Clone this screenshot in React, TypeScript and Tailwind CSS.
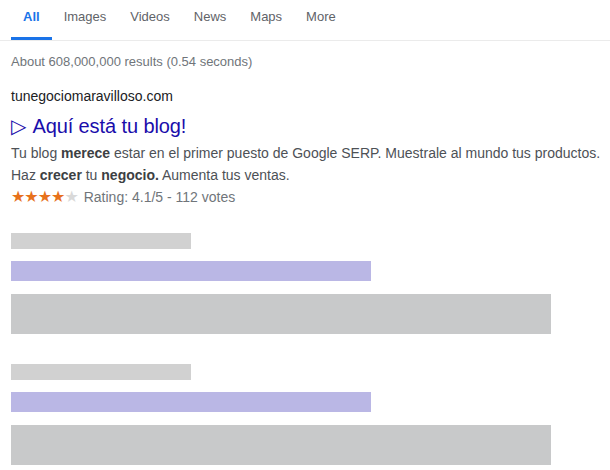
import React from 'react';

const tabs = ['All', 'Images', 'Videos', 'News', 'Maps', 'More'];

const SkeletonResult = () => (
  <div className="flex flex-col">
    <div className="h-[16px] w-[180px] bg-[#d1d1d1]" />
    <div className="mt-[12px] h-[20px] w-[360px] bg-[#bab7e5]" />
    <div className="mt-[13px] h-[40px] w-[540px] bg-[#c8c9ca]" />
  </div>
);

export default function App() {
  return (
    <div className="w-[610px] h-[470px] bg-white overflow-hidden font-['Liberation_Sans',Arial,sans-serif]">
      {/* Tabs */}
      <nav className="flex pl-[11px] border-b border-[#ebebeb]">
        {tabs.map((t, i) => (
          <div
            key={t}
            className={
              i === 0
                ? 'h-[40px] px-3 pt-[9px] text-[13px] leading-4 font-bold text-[#1a73e8] border-b-[3px] border-[#1a73e8]'
                : 'h-[40px] px-3 pt-[9px] text-[13px] leading-4 text-[#5f6368]'
            }
          >
            {t}
          </div>
        ))}
      </nav>

      <div className="pl-[11px]">
        <p className="mt-[13px] text-[13px] leading-4 text-[#70757a]">
          About 608,000,000 results (0.54 seconds)
        </p>

        {/* Result */}
        <p className="mt-[16px] text-[14px] leading-5 text-[#202124]">tunegociomaravilloso.com</p>
        <h3 className="mt-[7px] flex items-center gap-[6px] h-[26px] text-[20px] leading-[26px] text-[#1a0dab]">
          <span className="font-['DejaVu_Sans',sans-serif] text-[20px] leading-[26px]">▷</span>
          <span className="tracking-[-0.1px]">Aquí está tu blog!</span>
        </h3>
        <div className="mt-[3px] text-[14px] leading-[22px] text-[#4d5156] whitespace-nowrap">
          <span className="block">
            Tu blog <b className="text-[#3c4043]">merece</b> estar en el primer puesto de Google SERP. Muestrale al mundo tus productos.
          </span>
          <span className="block">
            Haz <b className="text-[#3c4043]">crecer</b> tu <b className="text-[#3c4043]">negocio.</b> Aumenta tus ventas.
          </span>
          <span className="flex items-center gap-[6px] h-[22px]">
            <span className="font-['DejaVu_Sans',sans-serif] text-[16px] leading-[22px] tracking-[-1px]">
              <span className="text-[#e7711b]">★★★★</span>
              <span className="text-[#d9d9d9]">★</span>
            </span>
            <span className="text-[#70757a]">Rating: 4.1/5 - 112 votes</span>
          </span>
        </div>

        {/* Placeholder results */}
        <div className="mt-[25px] flex flex-col gap-[30px]">
          <SkeletonResult />
          <SkeletonResult />
        </div>
      </div>
    </div>
  );
}
